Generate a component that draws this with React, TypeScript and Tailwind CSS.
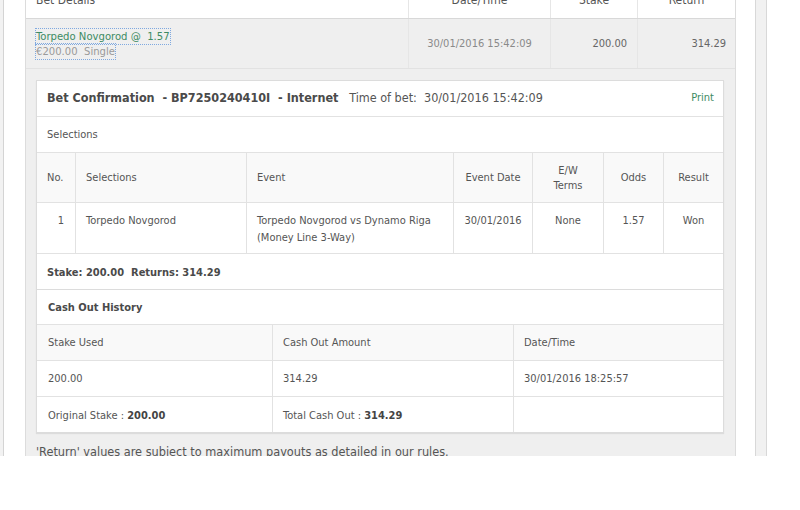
import React from "react";

const font = { fontFamily: '"DejaVu Sans Condensed", "DejaVu Sans", Tahoma, sans-serif' };

const selCols = "grid grid-cols-[39px_171px_207px_79px_71px_60px_1fr]";
const cashCols = "grid grid-cols-[236px_241px_1fr]";

export default function App() {
  return (
    <div style={font} className="w-[800px] h-[510px] bg-white text-[11px] text-[#555]">
      <div className="flex h-[456px] overflow-hidden">
        {/* left edge strips */}
        <div className="w-[4px] bg-[#f2f2f2] border-r border-[#d4d4d4]" />
        <div className="w-[22px] bg-white border-r border-[#dcdcdc]" />

        {/* main panel */}
        <div className="w-[710px] flex flex-col bg-[#efefef] border-r border-[#dcdcdc]">
          {/* header */}
          <div className="-mt-[18px] h-[37px] shrink-0 grid grid-cols-[383px_142px_87px_1fr] bg-white border-b border-[#d8d8d8] text-[12px] text-[#555]">
            <div className="flex items-center pl-[10px] border-r border-[#e6e6e6]">Bet Details</div>
            <div className="flex items-center justify-center border-r border-[#e6e6e6]">Date/Time</div>
            <div className="flex items-center justify-center border-r border-[#e6e6e6]">Stake</div>
            <div className="flex items-center justify-center">Return</div>
          </div>

          {/* bet summary row */}
          <div className="h-[50px] shrink-0 grid grid-cols-[383px_142px_87px_1fr] border-b border-[#e2e2e2]">
            <div className="flex flex-col justify-center items-start pl-[10px] border-r border-[#e6e6e6] leading-[15px]">
              <span className="text-[11.2px] text-[#3d8b63] outline-1 outline-dotted outline-[#7fa9e0]">Torpedo Novgorod @&nbsp; 1.57</span>
              <span className="text-[11.2px] text-[#9a9a9a] outline-1 outline-dotted outline-[#7fa9e0]">€200.00&nbsp; Single</span>
            </div>
            <div className="flex items-center justify-center pt-[2px] text-[#8a8a8a] border-r border-[#e6e6e6]">30/01/2016 15:42:09</div>
            <div className="flex items-center justify-end pt-[2px] pr-[10px] text-[#666] border-r border-[#e6e6e6]">200.00</div>
            <div className="flex items-center justify-end pt-[2px] pr-[9px] text-[#666]">314.29</div>
          </div>

          {/* confirmation card */}
          <div className="mt-[11px] ml-[10px] mr-[11px] bg-white border border-[#dcdcdc] shadow-[0_1px_1px_rgba(0,0,0,0.08)]">
            <div className="h-[36px] flex items-center justify-between pl-[10px] pr-[9px] border-b border-[#e2e2e2]">
              <div className="text-[12.5px] text-[#555]">
                <span className="font-bold text-[#4a4a4a]">Bet Confirmation&nbsp; - BP7250240410I&nbsp; - Internet</span>
                <span>&nbsp;&nbsp; Time of bet:&nbsp;&nbsp;30/01/2016 15:42:09</span>
              </div>
              <span className="text-[#3d8b63]">Print</span>
            </div>

            <div className="h-[36px] flex items-center pt-[1px] pl-[10px] border-b border-[#e2e2e2]">Selections</div>

            <div className={`${selCols} h-[50px] bg-[#f9f9f9] border-b border-[#e2e2e2] leading-[15px]`}>
              <div className="flex items-center pl-[10px] border-r border-[#e2e2e2]">No.</div>
              <div className="flex items-center pl-[10px] border-r border-[#e2e2e2]">Selections</div>
              <div className="flex items-center pl-[10px] border-r border-[#e2e2e2]">Event</div>
              <div className="flex items-center justify-center border-r border-[#e2e2e2]">Event Date</div>
              <div className="flex items-center justify-center text-center border-r border-[#e2e2e2]">
                E/W
                <br />
                Terms
              </div>
              <div className="flex items-center justify-center border-r border-[#e2e2e2]">Odds</div>
              <div className="flex items-center justify-center">Result</div>
            </div>

            <div className={`${selCols} h-[51px] border-b border-[#e2e2e2] leading-[17px]`}>
              <div className="pt-[9px] pr-[11px] text-right border-r border-[#e2e2e2]">1</div>
              <div className="pt-[9px] pl-[10px] border-r border-[#e2e2e2]">Torpedo Novgorod</div>
              <div className="pt-[9px] pl-[10px] border-r border-[#e2e2e2]">
                Torpedo Novgorod vs Dynamo Riga
                <br />
                (Money Line 3-Way)
              </div>
              <div className="pt-[9px] text-center border-r border-[#e2e2e2]">30/01/2016</div>
              <div className="pt-[9px] text-center border-r border-[#e2e2e2]">None</div>
              <div className="pt-[9px] text-center border-r border-[#e2e2e2]">1.57</div>
              <div className="pt-[9px] text-center">Won</div>
            </div>

            <div className="h-[36px] flex items-center pt-[3px] pl-[10px] font-bold text-[#4a4a4a] border-b border-[#dcdcdc]">
              Stake: 200.00&nbsp; Returns: 314.29
            </div>

            <div className="h-[35px] flex items-center pt-[2px] pl-[11px] font-bold text-[#4a4a4a] border-b border-[#e2e2e2]">
              Cash Out History
            </div>

            <div className={`${cashCols} h-[36px] bg-[#f9f9f9] border-b border-[#e2e2e2]`}>
              <div className="flex items-center pt-[2px] pl-[11px] border-r border-[#e2e2e2]">Stake Used</div>
              <div className="flex items-center pt-[2px] pl-[10px] border-r border-[#e2e2e2]">Cash Out Amount</div>
              <div className="flex items-center pt-[2px] pl-[10px]">Date/Time</div>
            </div>

            <div className={`${cashCols} h-[36px] border-b border-[#e2e2e2]`}>
              <div className="flex items-center pt-[2px] pl-[11px] border-r border-[#e2e2e2]">200.00</div>
              <div className="flex items-center pt-[2px] pl-[10px] border-r border-[#e2e2e2]">314.29</div>
              <div className="flex items-center pt-[2px] pl-[10px]">30/01/2016 18:25:57</div>
            </div>

            <div className={`${cashCols} h-[35px]`}>
              <div className="flex items-center pt-[3px] pl-[11px] border-r border-[#e2e2e2]">
                Original Stake :&nbsp;<span className="font-bold text-[#444]">200.00</span>
              </div>
              <div className="flex items-center pt-[3px] pl-[10px] border-r border-[#e2e2e2]">
                Total Cash Out :&nbsp;<span className="font-bold text-[#444]">314.29</span>
              </div>
              <div />
            </div>
          </div>

          <p className="mt-[10px] pl-[10px] text-[12.6px] text-[#555]">
            'Return' values are subject to maximum payouts as detailed in our rules.
          </p>
        </div>

        {/* right gutter + scroll strip */}
        <div className="w-[19px] bg-white" />
        <div className="w-[12px] bg-[#f1f1f1] border-x border-[#d8d8d8]" />
        <div className="flex-1 bg-white" />
      </div>
    </div>
  );
}
